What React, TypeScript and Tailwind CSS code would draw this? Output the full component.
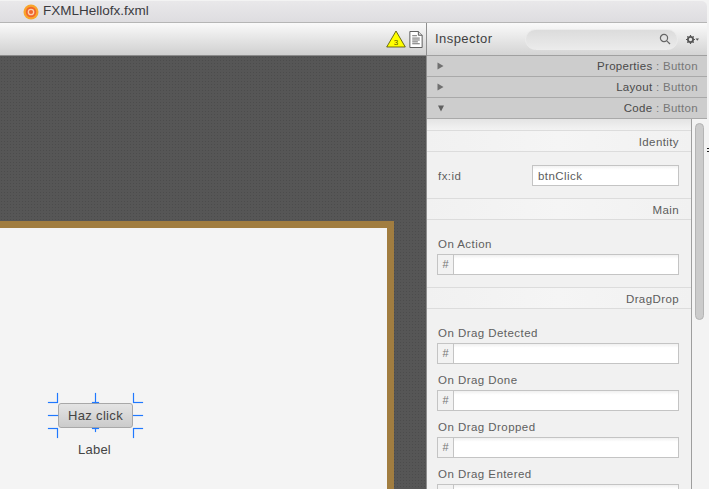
import React from "react";

const FONT = { fontFamily: '"Liberation Sans", Arial, sans-serif' };

function AccordionRow({ title, open, h }: { title: string; open?: boolean; h: string }) {
  return (
    <div className={`${h} flex items-center justify-between border-b border-[#a9a9a9] bg-[#cdcdcd] pl-[10px] pr-[9px] text-[11.5px] tracking-[0.3px]`}>
      {open ? (
        <svg width="8" height="7" viewBox="0 0 8 7"><path d="M1 0.5h6l-3 6z" fill="#606060" /></svg>
      ) : (
        <svg width="7" height="8" viewBox="0 0 7 8"><path d="M0.5 0.5l6 3.5-6 3.5z" fill="#707070" /></svg>
      )}
      <span className="pt-[1px]">
        <span className="text-[#4a4a4a]">{title}</span>
        <span className="text-[#777777]"> : Button</span>
      </span>
    </div>
  );
}

function SectionHeader({ title, className }: { title: string; className: string }) {
  return (
    <div className={`${className} flex items-center justify-end border-y border-[#dcdcdc] bg-gradient-to-r from-[#f1f1f1] via-[#f5f5f5] to-[#f1f1f1] pr-[12px] pt-[4px] text-[11.5px] tracking-[0.4px] text-[#5c5c5c]`}>
      {title}
    </div>
  );
}

function HashField({ label, hash = true }: { label: string; hash?: boolean }) {
  return (
    <div className="flex flex-col pl-[10px] pr-[12px]">
      <div className="h-[26px] pl-[1px] pt-[7px] text-[11.5px] leading-[18px] tracking-[0.45px] text-[#5f5f5f]">{label}</div>
      <div className="flex h-[21px] border border-[#c4c4c4] bg-white">
        <div className="flex w-[16px] items-center justify-center border-r border-[#c4c4c4] bg-[#f2f2f2] text-[11px] text-[#777777]">{hash ? "#" : null}</div>
        <div className="flex-1 bg-gradient-to-b from-[#f0f0f0] to-white to-[20%]" />
      </div>
    </div>
  );
}

function Handle({ className }: { className: string }) {
  return <div className={`absolute bg-[#1f78ff] shadow-[0_0_1px_#1f78ff] ${className}`} />;
}

export default function App() {
  return (
    <div className="relative flex h-[489px] w-[709px] flex-col overflow-hidden bg-[#f3f3f3]" style={FONT}>
      <div className="absolute right-0 top-[148px] h-[4px] w-[2px] border-y border-[#222222]" />
      <div className="mr-[2px] flex h-[23px] shrink-0 items-center rounded-tr-[6px] border-t border-b border-t-[#f3f3f3] border-b-[#b5b5b5] bg-gradient-to-b from-[#e9e8ea] to-[#dedde0] pl-[23px]">
        <svg width="16" height="16" viewBox="0 0 16 16" className="shrink-0">
          <circle cx="8" cy="8" r="7.5" fill="#f9a52c" />
          <circle cx="8" cy="8" r="5.2" fill="#f0662c" />
          <circle cx="8" cy="8" r="2.7" fill="none" stroke="#fbd0b0" strokeWidth="1.3" />
        </svg>
        <span className="ml-[4px] text-[13.5px] text-[#3b3b3f]">FXMLHellofx.fxml</span>
      </div>

      <div className="mr-[2px] flex min-h-0 flex-1">
        <div className="flex w-[426px] shrink-0 flex-col">
          <div className="flex h-[33px] shrink-0 items-center justify-end gap-[3px] border-b border-[#8b8b8b] bg-gradient-to-b from-[#fafafa] to-[#d0d0d0] pr-[3px]">
            <svg width="20" height="18" viewBox="0 0 20 18">
              <path d="M10 1L19.3 17H0.7z" fill="#ffff00" stroke="#4a4a00" strokeWidth="0.8" />
              <text x="10" y="15" textAnchor="middle" fontSize="8" fill="#5a5a00" fontFamily="Liberation Sans">3</text>
            </svg>
            <svg width="14" height="17" viewBox="0 0 14 18">
              <path d="M0.5 0.5H9.5L13.5 4.5V17.5H0.5z" fill="#ffffff" stroke="#555555" />
              <path d="M9.5 0.5V4.5H13.5" fill="#dddddd" stroke="#555555" />
              <path d="M3 5h5M3 7.5h8M3 9.5h8M3 11.5h6M3 13.5h8" stroke="#666666" />
            </svg>
          </div>
          <div className="flex min-h-0 flex-1 flex-col bg-[#565656] bg-[radial-gradient(#4c4c4c_1px,transparent_1px)] bg-[length:3px_3px] pr-[32px] pt-[165px]">
            <div className="flex-1 border-t-[7px] border-r-[7px] border-[#a17d40] bg-[#f4f4f4]">
              <div className="relative ml-[58px] mt-[175px] flex w-[75px] flex-col items-center">
                <div className="flex h-[25px] w-[75px] items-center justify-center rounded-[3px] border border-[#a8a8a8] bg-gradient-to-b from-[#e4e4e4] to-[#cbcbcb] text-[13px] tracking-[0.35px] text-[#444444]">
                  Haz click
                </div>
                <div className="mt-[13px] pr-[2px] text-[13px] leading-[18px] tracking-[0.2px] text-[#444444]">Label</div>
                <Handle className="left-[-1px] top-[-10px] h-[10px] w-px" />
                <Handle className="left-[-10px] top-[-1px] h-px w-[9px]" />
                <Handle className="left-[-10px] top-[12px] h-px w-[10px]" />
                <Handle className="left-[-10px] top-[25px] h-px w-[9px]" />
                <Handle className="left-[-1px] top-[25px] h-[10px] w-px" />
                <Handle className="left-[37px] top-[-10px] h-[10px] w-px" />
                <Handle className="left-[34px] top-[-1px] h-px w-[7px]" />
                <Handle className="left-[34px] top-[25px] h-px w-[7px]" />
                <Handle className="left-[37px] top-[25px] h-[4px] w-px" />
                <Handle className="right-[-1px] top-[-10px] h-[10px] w-px" />
                <Handle className="right-[-10px] top-[-1px] h-px w-[9px]" />
                <Handle className="right-[-10px] top-[12px] h-px w-[10px]" />
                <Handle className="right-[-10px] top-[25px] h-px w-[9px]" />
                <Handle className="right-[-1px] top-[25px] h-[10px] w-px" />
              </div>
            </div>
          </div>
        </div>

        <div className="flex min-w-0 flex-1 flex-col border-l border-[#8f8f8f] bg-[#f1f1f1]">
          <div className="flex h-[33px] shrink-0 items-center border-b border-[#a0a0a0] bg-gradient-to-b from-[#fafafa] to-[#d4d4d4] pl-[8px] pr-[8px]">
            <span className="text-[13px] tracking-[0.45px] text-[#3f3f3f]">Inspector</span>
            <div className="ml-auto flex h-[21px] w-[153px] items-center justify-end rounded-full border border-[#ececec] bg-gradient-to-b from-[#dcdcdc] to-[#ebebeb] pr-[6px]">
              <svg width="12" height="12" viewBox="0 0 12 12" fill="none" stroke="#666666" strokeWidth="1.2">
                <circle cx="5" cy="5" r="3.6" />
                <path d="M7.8 7.8L11 11" />
              </svg>
            </div>
            <svg className="ml-[8px]" width="13" height="9" viewBox="0 0 13 9">
              <circle cx="4.5" cy="4.5" r="2.6" fill="none" stroke="#555555" strokeWidth="1.8" />
              <path d="M4.5 0v1.5M4.5 7.5V9M0 4.5h1.5M7.5 4.5H9M1.3 1.3l1 1M6.7 6.7l1 1M1.3 7.7l1-1M6.7 2.3l1-1" stroke="#555555" strokeWidth="1.2" />
              <path d="M9.5 3.5h3.5l-1.75 2.2z" fill="#555555" />
            </svg>
          </div>
          <AccordionRow title="Properties" h="h-[21px]" />
          <AccordionRow title="Layout" h="h-[21px]" />
          <AccordionRow title="Code" open h="h-[21px]" />

          <div className="flex min-h-0 flex-1 overflow-hidden">
            <div className="min-w-0 flex-1 border-r border-[#9e9e9e]">
              <div className="h-[11px] bg-gradient-to-b from-[#e4e4e4] to-[#f3f3f3]" />
              <SectionHeader title="Identity" className="h-[22px]" />
              <div className="flex h-[46px] items-center justify-between pl-[11px] pr-[12px]">
                <span className="pt-[3px] text-[11.5px] tracking-[0.45px] text-[#5f5f5f]">fx:id</span>
                <div className="flex h-[21px] w-[147px] items-center border border-[#c4c4c4] bg-gradient-to-b from-[#f2f2f2] to-white to-[20%] pl-[5px] pt-[3px] text-[11.5px] tracking-[0.45px] text-[#5c5c5c]">
                  btnClick
                </div>
              </div>
              <SectionHeader title="Main" className="h-[22px]" />
              <div className="pt-[8px]">
                <HashField label="On Action" />
              </div>
              <SectionHeader title="DragDrop" className="mt-[12px] h-[22px]" />
              <div className="pt-[8px]">
                <HashField label="On Drag Detected" />
                <HashField label="On Drag Done" />
                <HashField label="On Drag Dropped" />
                <HashField label="On Drag Entered" hash={false} />
              </div>
            </div>
            <div className="w-[15px] shrink-0 bg-[#f3f3f3] pl-[3px] pr-[3px] pt-[4px]">
              <div className="h-[197px] rounded-full border border-[#b4b4b4] bg-[#cbcbcb]" />
            </div>
          </div>
        </div>
      </div>
    </div>
  );
}
